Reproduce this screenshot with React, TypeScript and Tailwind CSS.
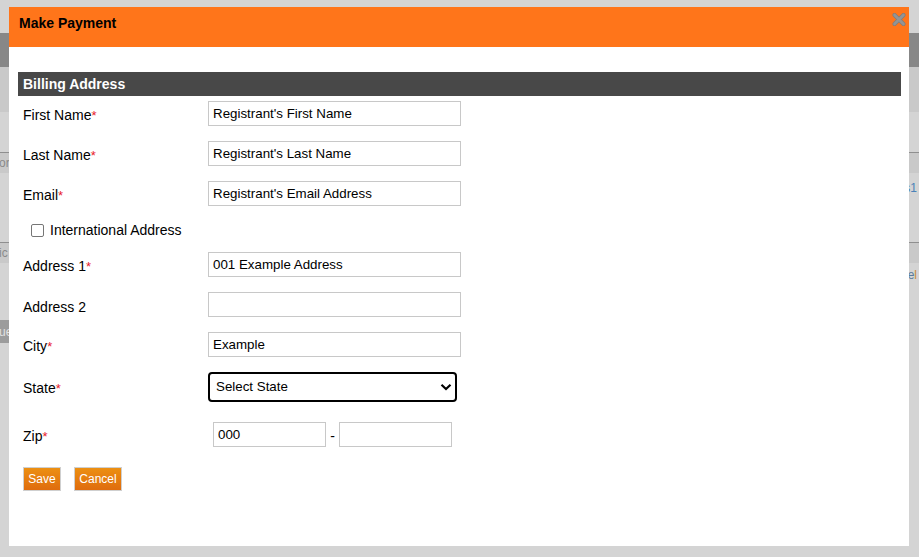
import React from "react";

function Req() {
  return <span className="text-[#e8202a] text-[13px]">*</span>;
}

function Field({ label, required, value }: { label: string; required?: boolean; value?: string }) {
  return (
    <div className="flex items-center h-[25px]">
      <div className="w-[185px] pt-[4px] text-[14px] leading-[16px] text-black">
        {label}
        {required && <Req />}
      </div>
      <input
        readOnly
        defaultValue={value ?? ""}
        className="w-[253px] h-[25px] border border-[#c8c8c8] bg-white px-[4px] text-[13.333px] text-black outline-none font-['Liberation_Sans',Arial,sans-serif]"
      />
    </div>
  );
}

export default function App() {
  return (
    <div className="relative w-[919px] h-[557px] overflow-hidden bg-[#d4d4d4] font-['Liberation_Sans',Arial,sans-serif]">
      {/* background page (dimmed) */}
      <div className="flex flex-col w-full">
        <div className="h-[33px]" />
        <div className="h-[34px] bg-[#878787]" />
        <div className="h-[45px] bg-[#c9c9c9]" />
        <div className="h-[40px]" />
        <div className="h-[21px] border-t border-[#8f8f8f] bg-[#c9c9c9] flex items-center justify-between text-[12px] text-[#8a8a8a]">
          <span className="-ml-[1px]">or</span>
        </div>
        <div className="h-[69px] flex justify-end pt-[6px] pr-[2px] text-[12px] text-[#4a82b8]">
          <span>s1</span>
        </div>
        <div className="h-[21px] border-t border-[#8f8f8f] bg-[#c9c9c9] flex items-center text-[12px] text-[#8a8a8a]">
          <span className="-ml-[1px]">ic</span>
        </div>
        <div className="h-[57px] flex justify-end pt-[3px] pr-[2px] text-[12px] text-[#5b7a99]">
          <span>
            De<span className="text-[#c98a3a]">l</span>
          </span>
        </div>
        <div className="h-[23px] w-[40px] bg-[#9c9c9c] text-[12px] text-[#e2e2e2] flex items-center">
          <span className="-ml-[1px]">ue</span>
        </div>
      </div>

      {/* modal */}
      <div className="absolute left-[9px] top-[7px] w-[900px] h-[539px] bg-white">
        <div className="relative h-[40px] bg-[#ff751a] pl-[10px] pt-[8px]">
          <div className="text-[14px] leading-[16px] font-bold text-black">Make Payment</div>
          <svg
            className="absolute right-[3px] top-[6px]"
            width="14"
            height="13"
            viewBox="0 0 14 13"
          >
            <path d="M2.5 2 L11.5 11 M11.5 2 L2.5 11" stroke="#7d7d7d" strokeWidth="4" strokeLinecap="round" />
            <path d="M2.5 2 L11.5 11 M11.5 2 L2.5 11" stroke="#949494" strokeWidth="2.6" strokeLinecap="round" />
          </svg>
        </div>

        <div className="mt-[25px] ml-[9px] mr-[8px] h-[24px] bg-[#484848] flex items-center pl-[5px]">
          <span className="text-[14px] leading-[16px] font-bold text-white">Billing Address</span>
        </div>

        <div className="pl-[14px] flex flex-col">
          <div className="mt-[5px]">
            <Field label="First Name" required value="Registrant's First Name" />
          </div>
          <div className="mt-[15px]">
            <Field label="Last Name" required value="Registrant's Last Name" />
          </div>
          <div className="mt-[15px]">
            <Field label="Email" required value="Registrant's Email Address" />
          </div>

          <div className="mt-[16px] h-[16px] flex items-center pl-[8px] gap-[6px]">
            <div className="w-[13px] h-[13px] rounded-[2px] border border-[#767676] bg-white" />
            <span className="text-[14px] leading-[16px] text-black">International Address</span>
          </div>

          <div className="mt-[14px]">
            <Field label="Address 1" required value="001 Example Address" />
          </div>
          <div className="mt-[15px]">
            <Field label="Address 2" />
          </div>
          <div className="mt-[15px]">
            <Field label="City" required value="Example" />
          </div>

          <div className="mt-[15px] flex items-center h-[30px]">
            <div className="w-[185px] pt-[2px] text-[14px] leading-[16px] text-black">
              State
              <Req />
            </div>
            <div className="w-[249px] h-[30px] border-2 border-black rounded-[4px] flex items-center justify-between pl-[6px] pr-[3px]">
              <span className="text-[13.333px] text-black">Select State</span>
              <svg width="12" height="8" viewBox="0 0 12 8">
                <path d="M1.5 1.8 L6 6 L10.5 1.8" fill="none" stroke="#000" strokeWidth="2.2" />
              </svg>
            </div>
          </div>

          <div className="mt-[20px] flex items-center h-[25px]">
            <div className="w-[185px] pt-[3px] text-[14px] leading-[16px] text-black">
              Zip
              <Req />
            </div>
            <input
              readOnly
              defaultValue="000"
              className="ml-[5px] w-[113px] h-[25px] border border-[#c8c8c8] px-[4px] text-[13.333px] text-black outline-none font-['Liberation_Sans',Arial,sans-serif]"
            />
            <span className="w-[13px] text-center text-[14px] pt-[3px] text-black">-</span>
            <input
              readOnly
              defaultValue=""
              className="w-[113px] h-[25px] border border-[#c8c8c8] px-[4px] text-[13.333px] text-black outline-none"
            />
          </div>

          <div className="mt-[20px] flex gap-[13px]">
            <button className="w-[38px] h-[24px] border border-[#cfcfcf] bg-linear-to-b from-[#ec8f12] to-[#df6c0e] text-white text-[12px] leading-[14px]">
              Save
            </button>
            <button className="w-[48px] h-[24px] border border-[#cfcfcf] bg-linear-to-b from-[#ec8f12] to-[#df6c0e] text-white text-[12px] leading-[14px]">
              Cancel
            </button>
          </div>
        </div>
      </div>
    </div>
  );
}
